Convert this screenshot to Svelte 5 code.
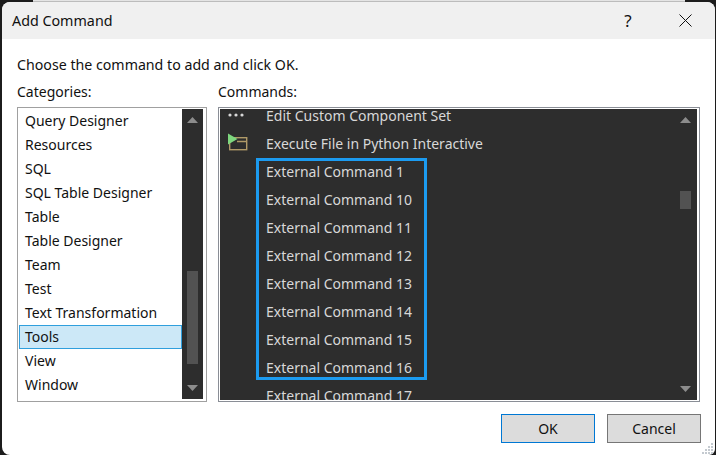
<script>
  const categories = ['Query Designer', 'Resources', 'SQL', 'SQL Table Designer', 'Table', 'Table Designer', 'Team', 'Test', 'Text Transformation', 'Tools', 'View', 'Window']
  const externals = ['1', '10', '11', '12', '13', '14', '15', '16', '17']
</script>

<div class="behind"></div>
<div class="dialog">
  <header class="titlebar">
    <span class="title">Add Command</span>
    <span class="help">?</span>
    <svg class="close" width="13" height="13" viewBox="0 0 13 13">
      <path d="M.5.5l12 12M12.5.5l-12 12" stroke="#111" stroke-width="1" fill="none" />
    </svg>
  </header>

  <div class="body">
    <p class="intro">Choose the command to add and click OK.</p>
    <div class="columns">
      <section class="cat-col">
        <div class="label">Categories:</div>
        <div class="listbox cats">
          <ul>
            {#each categories as c}
              <li class:selected={c === 'Tools'}>{c}</li>
            {/each}
          </ul>
          <div class="scrollbar">
            <svg class="arrow" width="11" height="6" viewBox="0 0 11 6"><path d="M5.5 0L11 6H0z" /></svg>
            <div class="track"><div class="thumb cat-thumb"></div></div>
            <svg class="arrow" width="11" height="6" viewBox="0 0 11 6"><path d="M0 0h11L5.5 6z" /></svg>
          </div>
        </div>
      </section>

      <section class="cmd-col">
        <div class="label">Commands:</div>
        <div class="listbox cmds">
          <ul>
            <li>
              <span class="ico">
                <svg width="18" height="6" viewBox="0 0 18 6"><g fill="#d8d8d8"><circle cx="3" cy="3" r="1.6" /><circle cx="9" cy="3" r="1.6" /><circle cx="15" cy="3" r="1.6" /></g></svg>
              </span>
              Edit Custom Component Set
            </li>
            <li>
              <span class="ico">
                <svg width="21" height="20" viewBox="0 -2 21 20">
                  <rect x="2.7" y="2.7" width="17" height="12" fill="none" stroke="#b09a68" stroke-width="1.4" />
                  <path d="M10 6.5h9.5" stroke="#b09a68" stroke-width="1.6" />
                  <path d="M1 -1.5l9.5 5.5L1 9.5z" fill="#7ed77e" />
                </svg>
              </span>
              Execute File in Python Interactive
            </li>
            {#each externals as n}
              <li><span class="ico"></span>External Command {n}</li>
            {/each}
          </ul>
          <div class="highlight"></div>
          <div class="scrollbar">
            <svg class="arrow" width="11" height="6" viewBox="0 0 11 6"><path d="M5.5 0L11 6H0z" /></svg>
            <div class="track"><div class="thumb cmd-thumb"></div></div>
            <svg class="arrow" width="11" height="6" viewBox="0 0 11 6"><path d="M0 0h11L5.5 6z" /></svg>
          </div>
        </div>
      </section>
    </div>

    <div class="buttons">
      <button class="ok">OK</button>
      <button>Cancel</button>
    </div>
  </div>

  <svg class="grip" width="14" height="14" viewBox="0 0 14 14">
    <g fill="#c4cad0">
      <rect x="10" y="2" width="2" height="2" />
      <rect x="7" y="5" width="2" height="2" /><rect x="10" y="5" width="2" height="2" />
      <rect x="4" y="8" width="2" height="2" /><rect x="7" y="8" width="2" height="2" /><rect x="10" y="8" width="2" height="2" />
      <rect x="1" y="11" width="2" height="2" /><rect x="4" y="11" width="2" height="2" /><rect x="7" y="11" width="2" height="2" /><rect x="10" y="11" width="2" height="2" />
    </g>
  </svg>
</div>

<style>
  :global(body) {
    margin: 0;
    background: #1c1c1c;
  }
  /* sliver of the window behind the dialog */
  .behind {
    position: absolute;
    top: 0;
    left: 33px;
    width: 652px;
    height: 2px;
    background: #bcbcbc;
    border-top: 1px solid #e4e4e4;
    box-sizing: border-box;
  }
  .dialog {
    position: relative;
    box-sizing: border-box;
    width: 713px;
    height: 453px;
    margin: 2px 0 0 2px;
    background: #fff;
    border-radius: 8px 8px 6px 8px;
    overflow: hidden;
    font-family: "Noto Sans", "Open Sans", sans-serif;
    font-size: 14px;
    color: #111;
  }
  .titlebar {
    display: flex;
    align-items: center;
    height: 37px;
    background: #f0f0f0;
    padding: 0 0 0 10px;
  }
  .title {
    flex: 1;
    font-size: 14.3px;
  }
  .help {
    width: 14px;
    font-size: 17px;
    margin-right: 44px;
    text-align: center;
  }
  .close {
    margin-right: 23px;
  }
  .body {
    padding: 0 14px 0 15px;
  }
  .intro {
    margin: 0;
    padding-top: 16px;
    line-height: 20px;
    font-size: 14.2px;
  }
  .columns {
    display: flex;
    gap: 11px;
    margin-top: 8px;
  }
  .label {
    height: 24px;
    line-height: 18px;
  }
  .listbox {
    position: relative;
    box-sizing: border-box;
    display: flex;
    height: 295px;
    border: 1px solid #a0a0a0;
    overflow: hidden;
  }
  ul {
    list-style: none;
    margin: 0;
    padding: 0;
    flex: 1;
    overflow: hidden;
  }
  .cat-col {
    width: 190px;
  }
  .cmd-col {
    width: 482px;
  }
  .cats {
    padding: 1px 3px 2px 1px;
  }
  .cats li {
    box-sizing: border-box;
    height: 24px;
    line-height: 22px;
    padding: 0 5px;
    border: 1px solid transparent;
  }
  .cats li.selected {
    background: #cce8f7;
    border-color: #2f9fdd;
  }
  .cmds {
    padding: 1px 2px 1px 1px;
    border-color: #8a8e96;
    background: #fff;
  }
  .cmds ul {
    background: #2d2d2d;
    color: #d8d8d8;
  }
  .cmds li {
    display: flex;
    align-items: center;
    height: 28px;
    white-space: nowrap;
  }
  .cmds li:first-child {
    margin-top: -8px;
  }
  .ico {
    display: flex;
    align-items: center;
    width: 46px;
    padding-left: 7px;
    box-sizing: border-box;
    flex: none;
  }
  .highlight {
    position: absolute;
    left: 37px;
    top: 50px;
    width: 171px;
    height: 222px;
    box-sizing: border-box;
    border: 3px solid #1c9bf0;
  }
  .scrollbar {
    display: flex;
    flex-direction: column;
    align-items: center;
    width: 21px;
    background: #2d2d2d;
    padding: 8px 0;
    box-sizing: border-box;
    flex: none;
  }
  .cmds .scrollbar {
    width: 24px;
    margin-left: -1px;
  }
  .track {
    flex: 1;
    width: 11px;
    position: relative;
  }
  .thumb {
    width: 11px;
    background: #525252;
  }
  .cat-thumb {
    height: 93px;
    margin-top: 148px;
  }
  .cmd-thumb {
    height: 18px;
    margin-top: 68px;
  }
  .arrow path {
    fill: #8c8c8c;
  }
  .buttons {
    display: flex;
    justify-content: flex-end;
    gap: 12px;
    margin-top: 12px;
  }
  button {
    box-sizing: border-box;
    width: 94px;
    height: 29px;
    background: #dcdcdc;
    border: 1px solid #767676;
    font: inherit;
    color: #111;
    padding: 0;
  }
  .ok {
    border-color: #0078d4;
  }
  .grip {
    position: absolute;
    right: 0;
    bottom: 0;
  }
</style>
